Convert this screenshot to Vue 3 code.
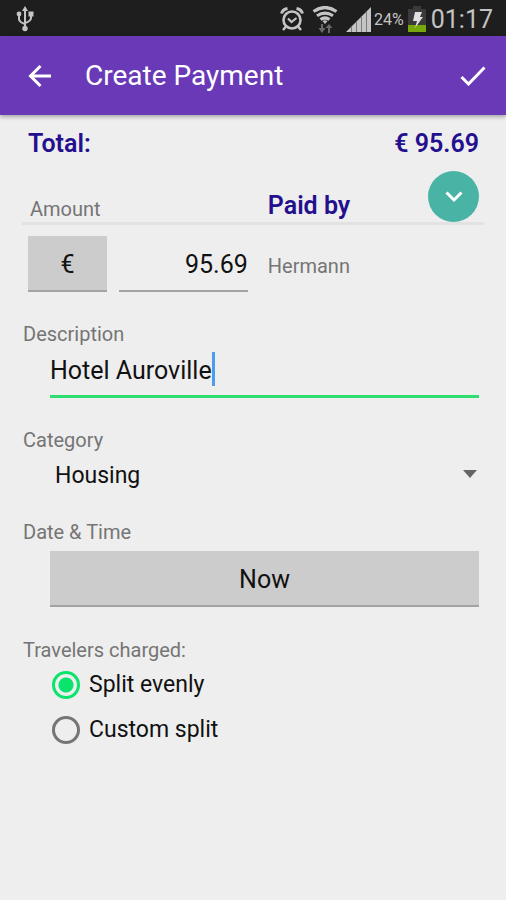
<template>
  <div class="screen">
    <div class="status-bar">
      <svg class="usb" viewBox="0 0 18 26" width="18" height="26" fill="none" stroke="#c4c4c4" stroke-width="2">
        <path d="M9 3v19M3 9v4q0 3 6 5M15 8v4q0 3-6 5" />
        <path d="M9 0l3 5H6z" fill="#c4c4c4" stroke="none" />
        <circle cx="3" cy="8" r="2.4" fill="#c4c4c4" stroke="none" />
        <path d="M12.5 5.5h5v5h-5z" fill="#c4c4c4" stroke="none" />
        <circle cx="9" cy="22.5" r="2.7" fill="#c4c4c4" stroke="none" />
      </svg>
      <div class="status-icons">
        <svg viewBox="0 0 24 24" width="24" height="24" fill="none" stroke="#c4c4c4">
          <circle cx="12" cy="13" r="8.5" stroke-width="2.6" />
          <path d="M8 11.5l3.5 3.5 5-4" stroke-width="2.2" />
          <path d="M1.5 6.5q1-4 6-5M22.5 6.5q-1-4-6-5" stroke-width="3" />
          <path d="M6 19.5l-3 3.500M18 19.5l3 3.5" stroke-width="2.6" />
        </svg>
        <svg class="wifi" viewBox="0 0 26 27" width="26" height="27" fill="none" stroke="#c4c4c4" stroke-width="3.2">
          <path d="M1.5 5.5q11.5-8 23 0M5 9.8q8-5.5 16 0M8.5 13.5q4.5-3 9 0" />
          <path d="M10.5 15q2.5-1.5 5 0L13 18z" fill="#c4c4c4" stroke="none" />
          <path d="M9 18v4H6.500l3.500 5 3.500-5H11v-4zM16 27v-5h-2.500l3.500-4 3.500 4H18v5z" fill="#6a6a6a" stroke="none" />
        </svg>
        <svg class="signal" viewBox="0 0 25 25" width="25" height="25">
          <path d="M0 25L25 0v25z" fill="#c4c4c4" />
          <path d="M5.5 19.500V25M10.5 14.5V25M15.5 9.5V25M20.5 4.5V25" stroke="#7a7a7a" />
        </svg>
        <span class="percent">24%</span>
        <svg viewBox="0 0 18 26" width="18" height="26">
          <path d="M5 0h8v3h5v23H0V3h5z" fill="#3a3a3a" />
          <path d="M0 19h18v7H0z" fill="#76a80c" />
          <path d="M7 6h7l-2 5h3L7 22l2-7H5z" fill="#e0e0e0" />
        </svg>
        <span class="clock">01:17</span>
      </div>
    </div>

    <header class="app-bar">
      <button class="icon-button" type="button" aria-label="Back">
        <svg viewBox="0 0 24 24" width="24" height="24" fill="none" stroke="#fff" stroke-width="3">
          <path d="M23 12H3M12.5 2l-10 10 10 10" />
        </svg>
      </button>
      <h1>Create Payment</h1>
      <button class="icon-button" type="button" aria-label="Save">
        <svg viewBox="0 0 26 20" width="26" height="20" fill="none" stroke="#fff" stroke-width="3">
          <path d="M1.5 11l7 7L24.5 1.5" />
        </svg>
      </button>
    </header>

    <main class="form">
      <div class="total">
        <span>Total:</span>
        <span>{{ currency }} {{ amount }}</span>
      </div>

      <div class="columns heading">
        <label class="label" for="amount">Amount</label>
        <div class="paid-by">
          <h2>Paid by</h2>
          <button class="expand" type="button" aria-label="Show travelers">
            <svg viewBox="0 0 18 12" width="18" height="12" fill="none" stroke="#fff" stroke-width="3">
              <path d="M1.5 1.5L9 9l7.5-7.5" />
            </svg>
          </button>
        </div>
      </div>

      <div class="columns payer">
        <div class="amount">
          <button class="flat-button currency" type="button">{{ currency }}</button>
          <input id="amount" v-model="amount" type="text" inputmode="decimal">
        </div>
        <span class="label">Hermann</span>
      </div>

      <div class="section">
        <label class="label" for="description">Description</label>
        <div class="description">
          <input id="description" v-model="description" type="text">
          <span class="caret"></span>
        </div>
      </div>

      <div class="section">
        <label class="label" for="category">Category</label>
        <div class="select">
          <select id="category" v-model="category">
            <option v-for="item in categories" :key="item">{{ item }}</option>
          </select>
          <svg viewBox="0 0 14 8" width="14" height="8">
            <path d="M0 0h14L7 8z" fill="#656565" />
          </svg>
        </div>
      </div>

      <div class="section date">
        <label class="label" for="date">Date &amp; Time</label>
        <button id="date" class="flat-button now" type="button">Now</button>
      </div>

      <fieldset class="section split">
        <legend class="label">Travelers charged:</legend>
        <label v-for="option in splitOptions" :key="option.value" class="radio">
          <input v-model="split" type="radio" name="split" :value="option.value">
          <span>{{ option.text }}</span>
        </label>
      </fieldset>
    </main>
  </div>
</template>

<script setup>
import { ref } from 'vue'

const currency = ref('€')
const amount = ref('95.69')
const description = ref('Hotel Auroville')

const categories = ['Housing']
const category = ref('Housing')

const splitOptions = [
  { value: 'even', text: 'Split evenly' },
  { value: 'custom', text: 'Custom split' }
]
const split = ref('even')
</script>

<style>
body {
  margin: 0;
  background: #eee;
}
</style>

<style scoped>
.screen {
  min-height: 100vh;
  background: #eee;
  color: #111;
  font-family: Roboto, "Liberation Sans", sans-serif;
}

.screen * {
  box-sizing: border-box;
}

svg {
  display: block;
  flex: none;
}

button,
input,
select {
  margin: 0;
  padding: 0;
  border: 0;
  border-radius: 0;
  background: none;
  color: inherit;
  font: inherit;
  outline: none;
}

.status-bar {
  display: flex;
  align-items: center;
  justify-content: space-between;
  height: 36px;
  padding: 2px 13px 0 16px;
  background: #1e1e1e;
  color: #c4c4c4;
}

.status-icons {
  display: flex;
  align-items: center;
}

.wifi {
  margin: 0 8px;
}

.percent {
  margin: 0 4px 0 3px;
  font-size: 16px;
}

.clock {
  margin-left: 5px;
  font-size: 25px;
}

.app-bar {
  display: flex;
  align-items: center;
  height: 79px;
  padding: 0 20px 0 28px;
  background: #6939b7;
  color: #fff;
  box-shadow: 0 2px 4px rgba(0, 0, 0, 0.3);
}

.app-bar h1 {
  flex: 1;
  margin: 0 0 0 33px;
  font-size: 28px;
  font-weight: 400;
}

.form {
  padding: 13px 27px 24px 28px;
}

.total {
  display: flex;
  justify-content: space-between;
  color: #24108f;
  font-size: 25px;
  font-weight: 600;
  line-height: 32px;
}

.label {
  color: #757575;
  font-size: 20px;
  line-height: 24px;
}

.columns {
  display: grid;
  grid-template-columns: minmax(0, 51fr) minmax(0, 49fr);
  column-gap: 20px;
}

.heading {
  align-items: end;
  margin: 11px -5px 0 -6px;
  padding: 0 5px 0 6px;
  border-bottom: 3px solid #e2e2e2;
}

.heading .label {
  padding: 0 2px 1px;
}

.paid-by {
  display: flex;
  align-items: flex-end;
  justify-content: space-between;
}

.paid-by h2 {
  margin: 0;
  color: #24108f;
  font-size: 25px;
  font-weight: 600;
  line-height: 32px;
}

.expand {
  display: flex;
  align-items: center;
  justify-content: center;
  width: 51px;
  height: 51px;
  border-radius: 50%;
  background: #49b4a6;
}

.payer {
  align-items: center;
  margin-top: 11px;
}

.payer .label {
  padding-top: 4px;
}

.amount {
  display: flex;
  gap: 12px;
}

.amount input {
  flex: 1;
  min-width: 0;
  padding-top: 2px;
  border-bottom: 2px solid #a3a3a3;
  font-size: 25px;
  text-align: right;
}

.flat-button {
  height: 56px;
  padding-top: 2px;
  border-bottom: 2px solid #a3a3a3;
  background: #ccc;
  font-size: 25px;
}

.currency {
  width: 79px;
}

.section {
  display: flex;
  flex-direction: column;
  margin: 30px 0 0 -5px;
}

.description {
  display: flex;
  align-items: center;
  height: 52px;
  margin-left: 27px;
  border-bottom: 3px solid #2fde71;
}

.description input {
  max-width: calc(100% - 3px);
  field-sizing: content;
  font-size: 25px;
}

.caret {
  width: 3px;
  height: 34px;
  margin-bottom: 4px;
  background: #4c9cf0;
}

.select {
  position: relative;
  display: flex;
  margin-left: 32px;
}

.select select {
  flex: 1;
  height: 44px;
  padding-top: 2px;
  appearance: none;
  font-size: 23px;
}

.select svg {
  position: absolute;
  top: 18px;
  right: 2px;
  pointer-events: none;
}

.date {
  margin-top: 24px;
}

.now {
  margin: 7px 0 0 27px;
}

.split {
  margin-top: 31px;
  padding: 0;
  border: 0;
}

.split .label {
  padding: 0;
}

.radio {
  display: flex;
  align-items: center;
  gap: 9px;
  height: 45px;
  margin-left: 29px;
  font-size: 23px;
}

.radio input {
  width: 28px;
  height: 28px;
  appearance: none;
  border: 3px solid #757575;
  border-radius: 50%;
}

.radio input:checked {
  border-color: #0ae36c;
  background: radial-gradient(circle, #0ae36c 7px, transparent 8px);
}
</style>
